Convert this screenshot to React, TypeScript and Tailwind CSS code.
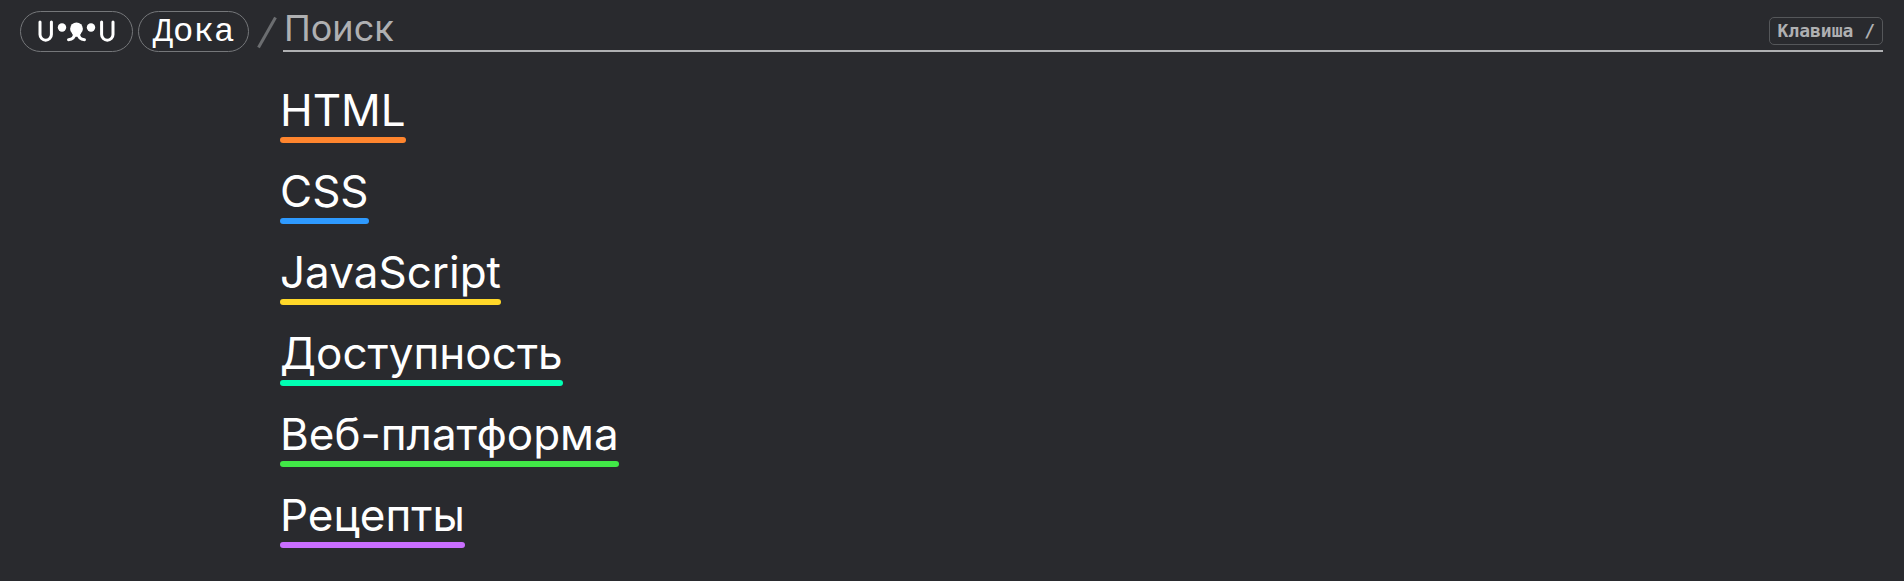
import { useEffect, useRef, useState } from "react";
import clsx from "clsx";

const sections = [
  { title: "HTML", href: "/html/", color: "bg-[#ff852e]" },
  { title: "CSS", href: "/css/", color: "bg-[#2e9aff]" },
  { title: "JavaScript", href: "/js/", color: "bg-[#ffd829]" },
  { title: "Доступность", href: "/a11y/", color: "bg-[#00ffb3]" },
  { title: "Веб-платформа", href: "/platform/", color: "bg-[#41e847]" },
  { title: "Рецепты", href: "/recipes/", color: "bg-[#c96eff]" },
];

const pill =
  "flex h-[41px] items-center justify-center rounded-full border border-[#75777a]";

const Logo = () => (
  <svg width="77" height="23" viewBox="0 0 77 23" fill="none" aria-hidden="true">
    <g stroke="currentColor" strokeWidth="3" strokeLinecap="round">
      <path d="M2 2v12.500a5.700 5.700 0 0 0 11.400 0V2" />
      <path d="M63.600 2v12.500a5.700 5.700 0 0 0 11.400 0V2" />
      <path d="M36.500 13.500c0 4-2.500 6-6 6.200M40.500 13.500c0 4 2.500 6 6 6.200" />
    </g>
    <g fill="currentColor">
      <circle cx="24" cy="7.500" r="4.200" />
      <circle cx="53" cy="7.500" r="4.200" />
      <circle cx="38.500" cy="8.800" r="6.400" />
      <path d="M34 12h9l-1 3.500c-.5 1.800-6.500 1.800-7 0Z" />
    </g>
  </svg>
);

const Header = () => {
  const [query, setQuery] = useState("");
  const inputRef = useRef<HTMLInputElement>(null);

  useEffect(() => {
    const onKeyDown = (event: KeyboardEvent) => {
      if (event.key === "/" && document.activeElement !== inputRef.current) {
        event.preventDefault();
        inputRef.current?.focus();
      }
    };

    document.addEventListener("keydown", onKeyDown);
    return () => document.removeEventListener("keydown", onKeyDown);
  }, []);

  return (
    <header className="flex items-start pt-[11px] pr-[21px] pl-5">
      <a href="/" aria-label="Главная" className={clsx(pill, "w-[113px] shrink-0")}>
        <Logo />
      </a>
      <a
        href="/"
        className={clsx(
          pill,
          "ml-[5px] w-[111px] shrink-0 font-['Liberation_Mono',monospace] text-[34px] leading-none",
        )}
      >
        Дока
      </a>
      <svg
        className="mt-[5px] ml-2 shrink-0 text-[#6b6d70]"
        width="20"
        height="33"
        viewBox="0 0 20 33"
        aria-hidden="true"
      >
        <path d="M1.500 31.500 18.500 1.500" stroke="currentColor" strokeWidth="3" />
      </svg>
      <form
        role="search"
        className="ml-1.5 flex h-[41px] min-w-0 flex-1 items-center border-b-2 border-[#afb0b2]"
        onSubmit={(event) => event.preventDefault()}
      >
        <input
          ref={inputRef}
          type="text"
          aria-label="Поиск"
          placeholder="Поиск"
          className="h-10 min-w-0 flex-1 bg-transparent pb-1.5 pl-px text-4xl leading-none outline-none placeholder:text-[#afb0b2]"
          value={query}
          onChange={(event) => setQuery(event.target.value)}
        />
        <kbd className="flex h-7 items-center rounded-[5px] border border-[#55575a] px-[7px] font-['DejaVu_Sans_Mono',monospace] text-lg font-bold text-[#afb0b2]">
          Клавиша /
        </kbd>
      </form>
    </header>
  );
};

const App = () => {
  return (
    <div className="min-h-screen bg-[#292a2e] font-[Inter,sans-serif] text-white">
      <Header />
      <nav className="pt-8 pl-[280px]">
        <ul className="flex flex-col items-start gap-[22px]">
          {sections.map(({ title, href, color }) => (
            <li key={title}>
              <a href={href} className="block text-[44px] leading-[53px]">
                {title}
                <span className={clsx("block h-1.5 rounded-full", color)} />
              </a>
            </li>
          ))}
        </ul>
      </nav>
    </div>
  );
};

export default App;
